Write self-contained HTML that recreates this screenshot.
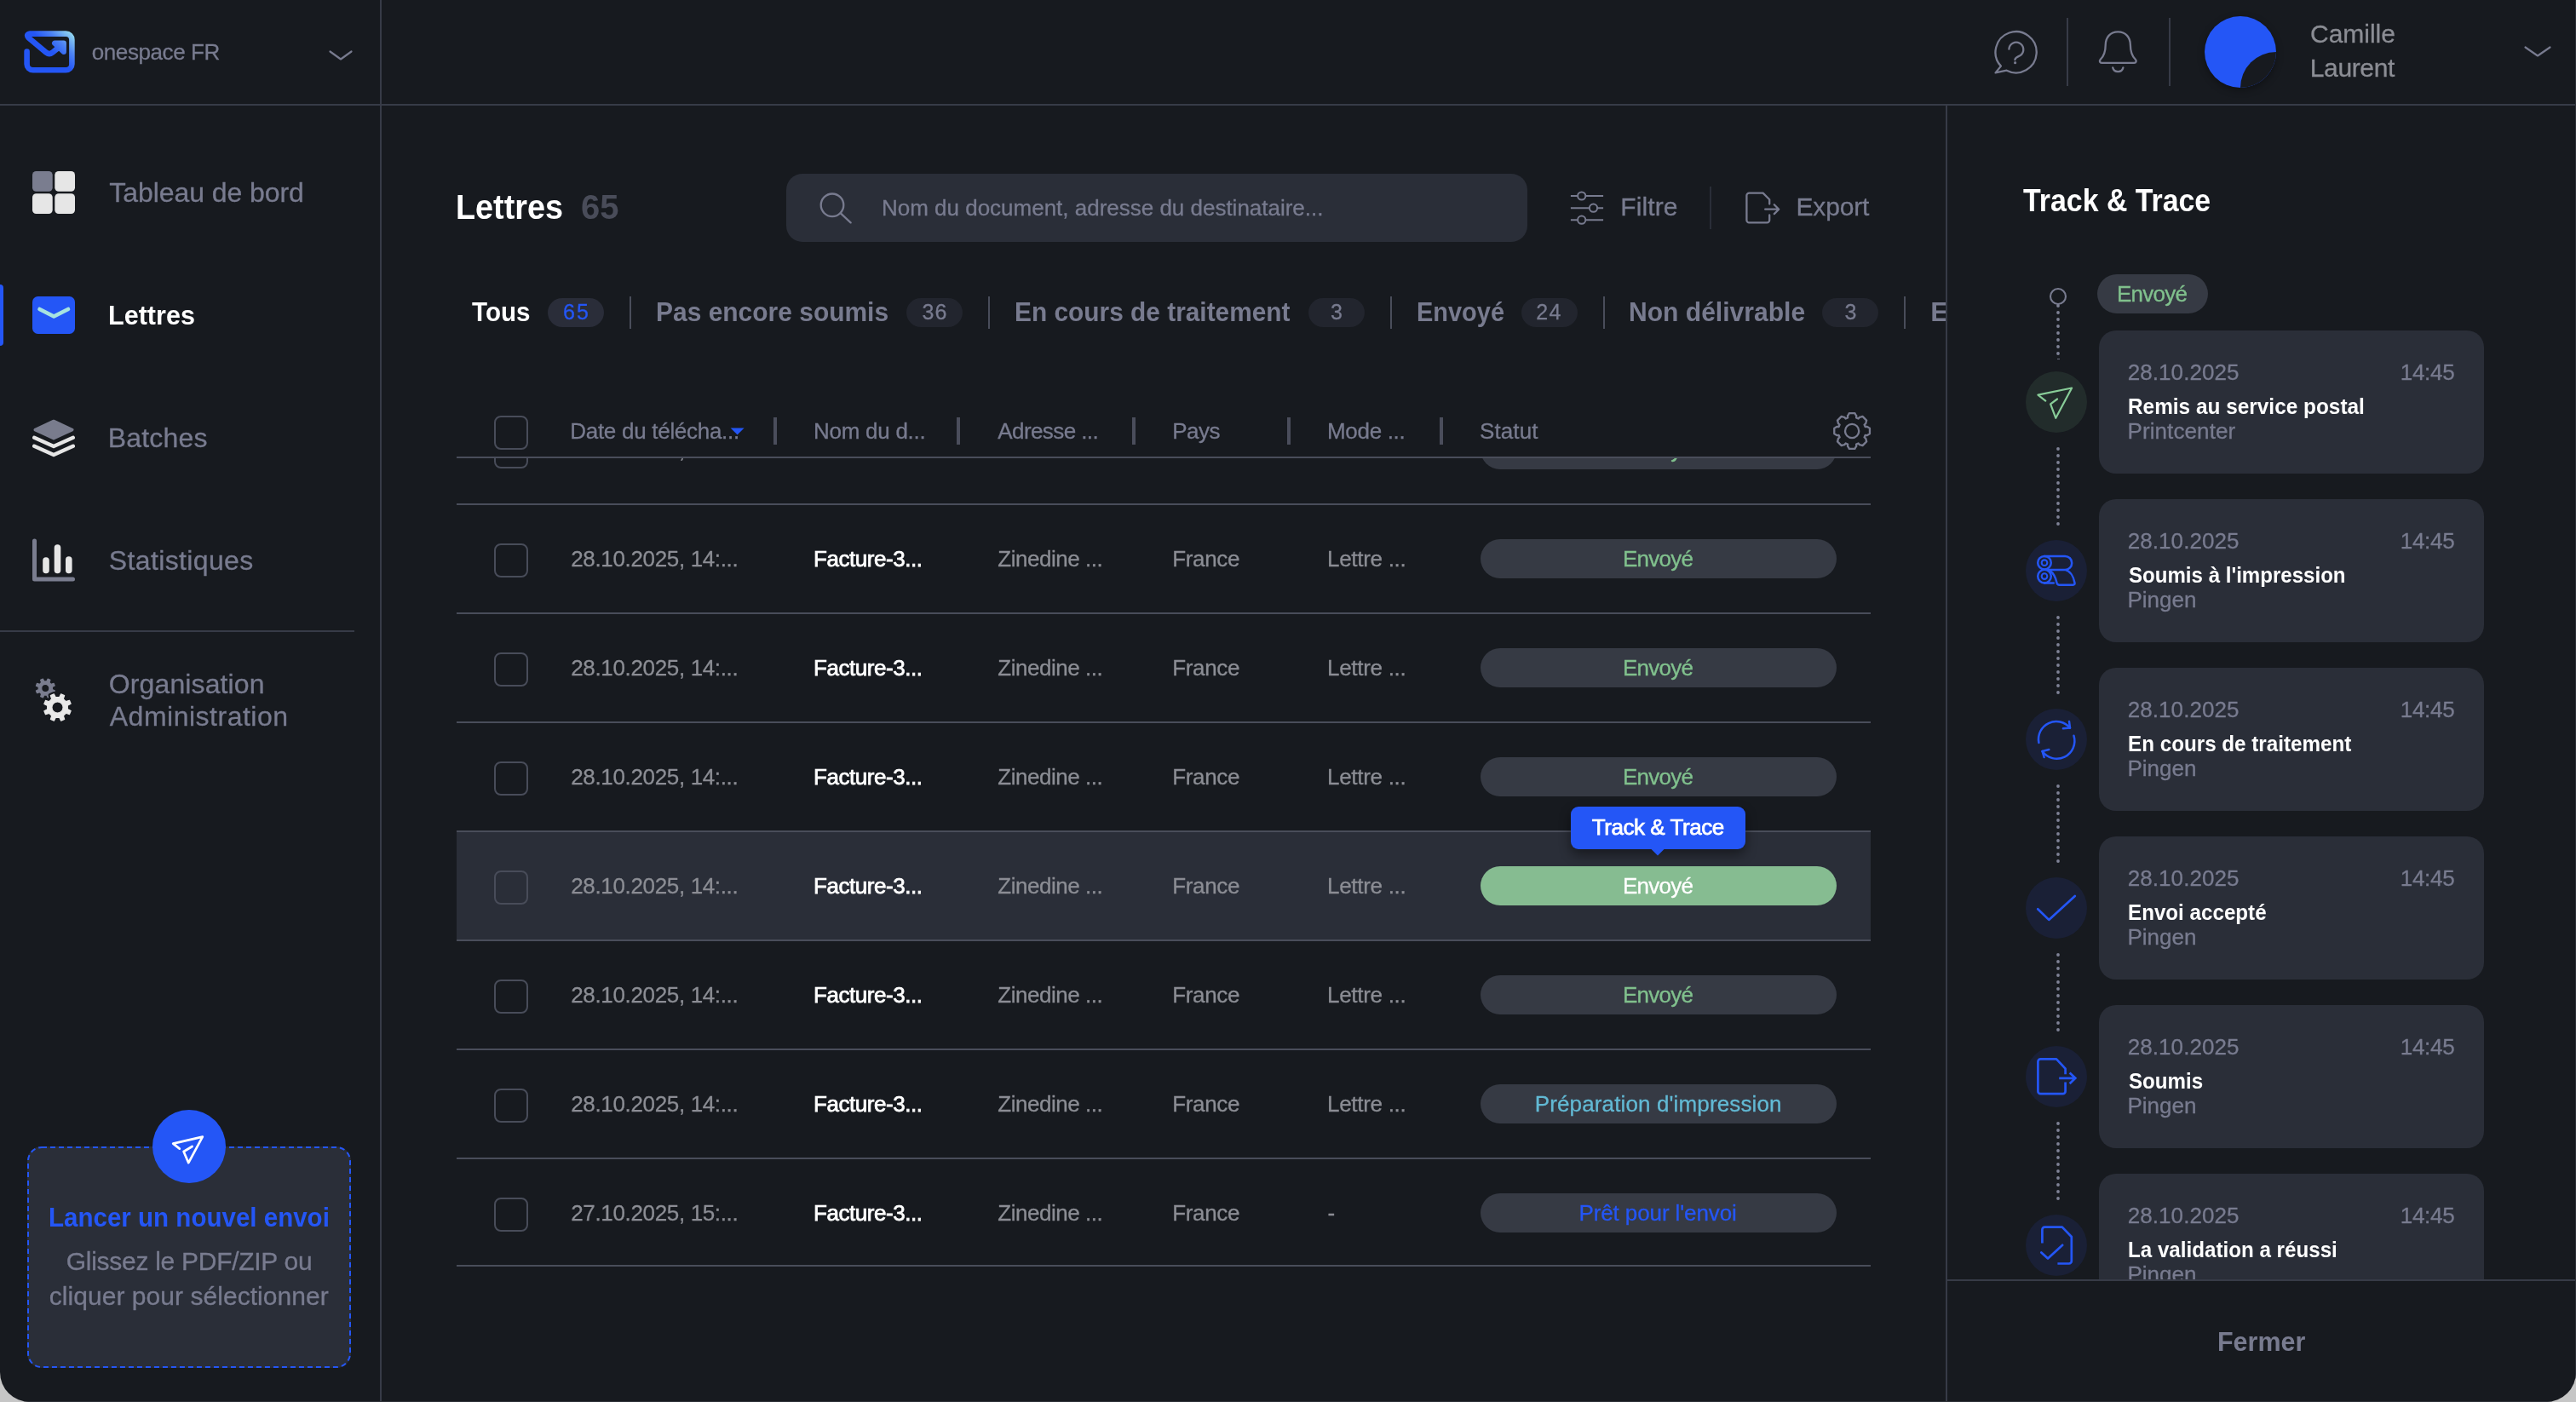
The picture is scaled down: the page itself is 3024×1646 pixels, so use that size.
<!DOCTYPE html>
<html lang="fr">
<head>
<meta charset="utf-8">
<title>Lettres – Track &amp; Trace</title>
<style>
html,body{margin:0;padding:0}
body{width:100vw;height:100vh;min-height:100%;overflow:hidden;background:#c6c6c6;font-family:"Liberation Sans",sans-serif}
#app{position:absolute;will-change:transform;left:0;top:0;width:3024px;height:1646px;background:#171a1f;border-radius:0 0 35px 35px;overflow:hidden}
#app div,#app svg,#app span.t{position:absolute}
.t{white-space:nowrap;line-height:1}
.clip,.g{left:0;top:0;width:3024px;height:1646px}
.g{position:absolute;display:block}
</style>
</head>
<body>
<div id="app">
<div style="left:446px;top:0px;width:2px;height:1646px;background:#373b47"></div><div style="left:0px;top:122px;width:3024px;height:2px;background:#373b47"></div><div style="left:2284px;top:123px;width:2px;height:1523px;background:#373b47"></div><div style="left:580px;top:488px;width:40px;height:40px;box-sizing:border-box;border:2px solid #484c59;border-radius:8px"></div>
<aside class="g" aria-label="Navigation principale"><svg style="left:28px;top:36px;" width="60" height="50" viewBox="0 0 60 50" fill="none">
<defs><linearGradient id="lg" gradientUnits="userSpaceOnUse" x1="33" y1="24" x2="55.5" y2="1.5"><stop offset="0" stop-color="#2456f6"/><stop offset=".45" stop-color="#4c82f3"/><stop offset="1" stop-color="#93d8ee"/></linearGradient></defs>
<path d="M3.6 24.6 V39.2 a7.1 7.1 0 0 0 7.1 7.1 H49.3 a7.1 7.1 0 0 0 7.1 -7.1 V10.700 a7.1 7.1 0 0 0 -7.1 -7.1 H7.4 Q2.2 4.4 5.4 8.2 L26.3 25.7 Q29.900 28.5 33.5 25.7 L44.5 16.6" stroke="url(#lg)" stroke-width="6.6" stroke-linecap="round" stroke-linejoin="round"/>
<path d="M36.2 14.8 H46.700 V24.8 Z" fill="url(#lg)" stroke="url(#lg)" stroke-width="6.4" stroke-linejoin="round"/>
</svg><svg style="left:385px;top:57px;" width="30" height="16" viewBox="0 0 30 16" fill="none"><path d="M2.5 3.5 L15 12.5 L27.5 3.5" stroke="#787b8f" stroke-width="2.2" stroke-linecap="round" stroke-linejoin="round"/></svg><svg style="left:38px;top:201px;" width="50" height="50" viewBox="0 0 50 50" fill="none">
<rect x="0" y="0" width="23.7" height="23.7" rx="4.5" fill="#7a7d8f"/>
<rect x="26.3" y="0" width="23.7" height="23.7" rx="4.5" fill="#e6e6e6"/>
<rect x="0" y="26.3" width="23.7" height="23.7" rx="4.5" fill="#e6e6e6"/>
<rect x="26.3" y="26.3" width="23.7" height="23.7" rx="4.5" fill="#e6e6e6"/>
</svg><div style="left:0px;top:334px;width:4px;height:72px;background:#2456f6;border-radius:0 4px 4px 0"></div><svg style="left:38px;top:348px;" width="50" height="44" viewBox="0 0 50 44" fill="none">
<rect x="0" y="0" width="50" height="44" rx="6.5" fill="#2456f6"/>
<path d="M8.5 15 L25.2 23.5 L42 15" stroke="#a6e3e0" stroke-width="4.6" stroke-linecap="round" stroke-linejoin="round"/>
</svg><svg style="left:38px;top:492px;" width="50" height="46" viewBox="0 0 50 46" fill="none">
<path d="M25 2.4 L46.8 12.6 L25 22.8 L3.2 12.6 Z" fill="#797c8d" stroke="#797c8d" stroke-width="3.4" stroke-linejoin="round"/>
<path d="M2.2 21.8 L25 32.1 L47.8 21.8" stroke="#e6e6e6" stroke-width="4.4" stroke-linecap="round" stroke-linejoin="round"/>
<path d="M2.2 31.7 L25 42 L47.8 31.7" stroke="#e6e6e6" stroke-width="4.4" stroke-linecap="round" stroke-linejoin="round"/>
</svg><svg style="left:38px;top:632px;" width="50" height="52" viewBox="0 0 50 52" fill="none">
<path d="M2.5 3 V48 H47.5" stroke="#7a7d8f" stroke-width="5" stroke-linecap="round" stroke-linejoin="round"/>
<path d="M16 26 V37.5 M29.5 11 V37.5 M42.8 25 V37.5" stroke="#e6e6e6" stroke-width="7.6" stroke-linecap="round"/>
</svg><div style="left:0px;top:740px;width:416px;height:2px;background:#373b47"></div><svg style="left:38px;top:792px;" width="52" height="60" viewBox="0 0 52 60" fill="none"><path d="M23.37 17.45 L26.23 18.87 L25.09 21.65 L22.06 20.64 L19.98 22.73 L21.00 25.76 L18.23 26.91 L16.79 24.06 L13.85 24.07 L12.43 26.93 L9.65 25.79 L10.66 22.76 L8.57 20.68 L5.54 21.70 L4.39 18.93 L7.24 17.49 L7.23 14.55 L4.37 13.13 L5.51 10.35 L8.54 11.36 L10.62 9.27 L9.60 6.24 L12.37 5.09 L13.81 7.94 L16.75 7.93 L18.17 5.07 L20.95 6.21 L19.94 9.24 L22.03 11.32 L25.06 10.30 L26.21 13.07 L23.36 14.51 Z M19.90 16.00 a4.6 4.6 0 1 0 -9.2 0 a4.6 4.6 0 1 0 9.2 0 Z" fill="#7a7d8f" fill-rule="evenodd" stroke="#7a7d8f" stroke-width="1.2" stroke-linejoin="round"/><path d="M41.31 40.62 L45.17 42.61 L43.53 46.60 L39.39 45.30 L36.35 48.35 L37.67 52.49 L33.69 54.15 L31.69 50.30 L27.38 50.31 L25.39 54.17 L21.40 52.53 L22.70 48.39 L19.65 45.35 L15.51 46.67 L13.85 42.69 L17.70 40.69 L17.69 36.38 L13.83 34.39 L15.47 30.40 L19.61 31.70 L22.65 28.65 L21.33 24.51 L25.31 22.85 L27.31 26.70 L31.62 26.69 L33.61 22.83 L37.60 24.47 L36.30 28.61 L39.35 31.65 L43.49 30.33 L45.15 34.31 L41.30 36.31 Z M36.10 38.50 a6.6 6.6 0 1 0 -13.2 0 a6.6 6.6 0 1 0 13.2 0 Z" fill="#171a1f" fill-rule="nonzero" stroke="#171a1f" stroke-width="5.5" stroke-linejoin="round"/><path d="M41.31 40.62 L45.17 42.61 L43.53 46.60 L39.39 45.30 L36.35 48.35 L37.67 52.49 L33.69 54.15 L31.69 50.30 L27.38 50.31 L25.39 54.17 L21.40 52.53 L22.70 48.39 L19.65 45.35 L15.51 46.67 L13.85 42.69 L17.70 40.69 L17.69 36.38 L13.83 34.39 L15.47 30.40 L19.61 31.70 L22.65 28.65 L21.33 24.51 L25.31 22.85 L27.31 26.70 L31.62 26.69 L33.61 22.83 L37.60 24.47 L36.30 28.61 L39.35 31.65 L43.49 30.33 L45.15 34.31 L41.30 36.31 Z M36.10 38.50 a6.6 6.6 0 1 0 -13.2 0 a6.6 6.6 0 1 0 13.2 0 Z" fill="#e9e9e9" fill-rule="evenodd" stroke="#e9e9e9" stroke-width="1.2" stroke-linejoin="round"/></svg><div style="left:32px;top:1346px;width:380px;height:260px;background:#2a2e38;border-radius:17px"></div><svg style="left:32px;top:1346px;" width="380" height="260" viewBox="0 0 380 260" fill="none"><rect x="1" y="1" width="378" height="258" rx="16" stroke="#2456f6" stroke-width="2" stroke-dasharray="6 4"/></svg><div style="left:179px;top:1303px;width:86px;height:86px;background:#2456f6;border-radius:50%"></div><svg style="left:198px;top:1328px;" width="46" height="44" viewBox="0 0 46 44" fill="none"><path d="M12.8 20.6 L5.2 14.6 L39.8 6.6 L23.3 37.2 L17.6 24 L27.6 18" stroke="#ffffff" stroke-width="2.7" stroke-linejoin="round" stroke-linecap="round"/></svg><span class="t" style="left:107.75px;top:48.49px;font-size:26px;color:#787b8f;letter-spacing:-0.412px;-webkit-text-stroke:0.3px currentColor;">onespace FR</span><span class="t" style="left:128.25px;top:209.91px;font-size:32px;color:#787b8f;letter-spacing:-0.069px;-webkit-text-stroke:0.3px currentColor;">Tableau de bord</span><span class="t" style="left:126.84px;top:353.66px;font-size:32px;color:#ffffff;font-weight:700;transform:scaleX(0.9552);transform-origin:0 50%;">Lettres</span><span class="t" style="left:126.75px;top:497.91px;font-size:32px;color:#787b8f;letter-spacing:0.188px;-webkit-text-stroke:0.3px currentColor;">Batches</span><span class="t" style="left:127.75px;top:641.66px;font-size:32px;color:#787b8f;letter-spacing:0.371px;-webkit-text-stroke:0.3px currentColor;">Statistiques</span><span class="t" style="left:127.75px;top:786.66px;font-size:32px;color:#787b8f;letter-spacing:0.124px;-webkit-text-stroke:0.3px currentColor;">Organisation</span><span class="t" style="left:128.75px;top:825.41px;font-size:32px;color:#787b8f;letter-spacing:0.504px;-webkit-text-stroke:0.3px currentColor;">Administration</span><span class="t" style="left:56.90px;top:1412.91px;font-size:32px;color:#2456f6;font-weight:700;transform:scaleX(0.9229);transform-origin:0 50%;">Lancer un nouvel envoi</span><span class="t" style="left:77.75px;top:1465.86px;font-size:30px;color:#787b8f;letter-spacing:-0.282px;-webkit-text-stroke:0.3px currentColor;">Glissez le PDF/ZIP ou</span><span class="t" style="left:57.75px;top:1506.61px;font-size:30px;color:#787b8f;letter-spacing:0.047px;-webkit-text-stroke:0.3px currentColor;">cliquer pour sélectionner</span></aside>
<header class="g"><svg style="left:2338px;top:33px;" width="58" height="58" viewBox="0 0 58 58" fill="none">
<path d="M10.9 44.6 A24.1 24.1 0 1 1 17.6 49.7 L4.6 52.4 Z" stroke="#787b8f" stroke-width="2.3" stroke-linejoin="round"/>
<path d="M20.4 24.6 a8.45 8.45 0 1 1 13.4 7.4 c-3.6 1.9 -6.4 2.4 -6.4 5.2" stroke="#787b8f" stroke-width="2.3" stroke-linecap="round"/>
<circle cx="27.6" cy="40.7" r="1.6" fill="#787b8f"/>
</svg><div style="left:2426px;top:21px;width:2px;height:80px;background:#373b47"></div><svg style="left:2460px;top:33px;" width="54" height="56" viewBox="0 0 54 56" fill="none">
<path d="M26.3 4.3 c-9.3 0 -14.6 7 -14.6 15.6 c0 8.4 -1.9 13 -6.1 17.1 c-1.4 1.5 -0.6 3.9 1.6 3.9 h38.2 c2.2 0 3 -2.4 1.6 -3.9 c-4.2 -4.1 -6.1 -8.7 -6.1 -17.1 c0 -8.600 -5.300 -15.600 -14.600 -15.600 Z" stroke="#787b8f" stroke-width="2.3" stroke-linejoin="round"/>
<path d="M20.2 46.4 a6.3 6.3 0 0 0 12.2 0" stroke="#787b8f" stroke-width="2.3" stroke-linecap="round"/>
</svg><div style="left:2546px;top:21px;width:2px;height:80px;background:#373b47"></div><div style="left:2588px;top:19px;width:84px;height:84px;border-radius:50%;background:#2456f6;overflow:hidden;box-shadow:0 3px 8px rgba(0,0,0,.35)"><div style="left:42px;top:42px;width:84px;height:84px;border-radius:50%;background:#171a1f"></div></div><svg style="left:2962px;top:52px;" width="34" height="18" viewBox="0 0 34 18" fill="none"><path d="M2.5 3.5 L17 13.5 L31.5 3.5" stroke="#787b8f" stroke-width="2.2" stroke-linecap="round" stroke-linejoin="round"/></svg><span class="t" style="left:2712.00px;top:25.36px;font-size:30px;color:#8b8d94;letter-spacing:-0.014px;-webkit-text-stroke:0.3px currentColor;">Camille</span><span class="t" style="left:2711.75px;top:65.36px;font-size:30px;color:#8b8d94;letter-spacing:-0.361px;-webkit-text-stroke:0.3px currentColor;">Laurent</span></header>
<main class="g"><div style="left:923px;top:204px;width:870px;height:80px;background:#2a2e38;border-radius:19px"></div><svg style="left:960px;top:223px;" width="44" height="44" viewBox="0 0 44 44" fill="none"><circle cx="17" cy="17.8" r="13.3" stroke="#787b8f" stroke-width="2.3"/><path d="M26.6 27.2 L38.6 38.4" stroke="#787b8f" stroke-width="2.3" stroke-linecap="round"/></svg><svg style="left:1842px;top:222px;" width="42" height="44" viewBox="0 0 42 44" fill="none">
<path d="M1.9 8 H9.8 M19.6 8 H40.1 M1.9 22.2 H23.6 M33.4 22.2 H40.1 M1.9 36.2 H9.8 M19.6 36.2 H40.1" stroke="#787b8f" stroke-width="2.1"/>
<circle cx="14.7" cy="8" r="4.6" stroke="#787b8f" stroke-width="2"/><circle cx="28.5" cy="22.2" r="4.6" stroke="#787b8f" stroke-width="2"/><circle cx="14.7" cy="36.2" r="4.6" stroke="#787b8f" stroke-width="2"/>
</svg><div style="left:2007px;top:219px;width:2px;height:50px;background:#2a2e38"></div><svg style="left:2046px;top:222px;" width="46" height="44" viewBox="0 0 46 44" fill="none">
<path d="M31.2 17.6 V12.2 L23.6 4.6 H7.4 a3 3 0 0 0 -3 3 V36.4 a3 3 0 0 0 3 3 H28.2 a3 3 0 0 0 3 -3 V30.4" stroke="#787b8f" stroke-width="2.3" stroke-linejoin="round" stroke-linecap="round"/>
<path d="M26.2 23.7 H42 M36.8 18.3 L42.2 23.7 L36.8 29.1" stroke="#787b8f" stroke-width="2.3" stroke-linejoin="round" stroke-linecap="round"/>
</svg><div class="clip" style="clip-path:inset(0 740px 0 0)"><div style="left:643px;top:350px;width:66px;height:34px;background:#2a2d39;border-radius:17px"></div><div style="left:739px;top:348px;width:2px;height:38px;background:#494d5a"></div><div style="left:1063.75px;top:350px;width:66.25px;height:34px;background:#22252e;border-radius:17px"></div><div style="left:1160px;top:348px;width:2px;height:38px;background:#494d5a"></div><div style="left:1535.75px;top:350px;width:66.25px;height:34px;background:#22252e;border-radius:17px"></div><div style="left:1632px;top:348px;width:2px;height:38px;background:#494d5a"></div><div style="left:1785.75px;top:350px;width:66.25px;height:34px;background:#22252e;border-radius:17px"></div><div style="left:1882px;top:348px;width:2px;height:38px;background:#494d5a"></div><div style="left:2138.75px;top:350px;width:66.25px;height:34px;background:#22252e;border-radius:17px"></div><div style="left:2235px;top:348px;width:2px;height:38px;background:#494d5a"></div><span class="t" style="left:554.25px;top:350.41px;font-size:32px;color:#ffffff;font-weight:700;transform:scaleX(0.9247);transform-origin:0 50%;">Tous</span><span class="t" style="left:661.00px;top:353.84px;font-size:25px;color:#2456f6;letter-spacing:2.096px;-webkit-text-stroke:0.3px currentColor;">65</span><span class="t" style="left:770.13px;top:350.41px;font-size:32px;color:#787b8f;font-weight:700;transform:scaleX(0.9363);transform-origin:0 50%;">Pas encore soumis</span><span class="t" style="left:1082.50px;top:353.84px;font-size:25px;color:#787b8f;letter-spacing:1.096px;-webkit-text-stroke:0.3px currentColor;">36</span><span class="t" style="left:1191.13px;top:350.41px;font-size:32px;color:#787b8f;font-weight:700;transform:scaleX(0.9331);transform-origin:0 50%;">En cours de traitement</span><span class="t" style="left:1562.00px;top:353.84px;font-size:25px;color:#787b8f;-webkit-text-stroke:0.3px currentColor;">3</span><span class="t" style="left:1662.69px;top:350.41px;font-size:32px;color:#787b8f;font-weight:700;transform:scaleX(0.9052);transform-origin:0 50%;">Envoyé</span><span class="t" style="left:1803.25px;top:353.84px;font-size:25px;color:#787b8f;letter-spacing:1.346px;-webkit-text-stroke:0.3px currentColor;">24</span><span class="t" style="left:1912.37px;top:350.41px;font-size:32px;color:#787b8f;font-weight:700;transform:scaleX(0.9394);transform-origin:0 50%;">Non délivrable</span><span class="t" style="left:2165.50px;top:353.84px;font-size:25px;color:#787b8f;-webkit-text-stroke:0.3px currentColor;">3</span><span class="t" style="left:2266.25px;top:350.41px;font-size:32px;color:#787b8f;font-weight:700;">Erreur</span></div><svg style="left:857px;top:502px;" width="18" height="9" viewBox="0 0 18 9" fill="none"><path d="M0.6 0.4 H16.6 L8.6 8.4 Z" fill="#2456f6"/></svg><div style="left:908px;top:490px;width:4px;height:32px;background:#4a4d5b"></div><div style="left:1123px;top:490px;width:4px;height:32px;background:#4a4d5b"></div><div style="left:1329.25px;top:490px;width:4px;height:32px;background:#4a4d5b"></div><div style="left:1511.25px;top:490px;width:4px;height:32px;background:#4a4d5b"></div><div style="left:1690px;top:490px;width:4px;height:32px;background:#4a4d5b"></div><svg style="left:2150px;top:482px;" width="48" height="48" viewBox="0 0 48 48" fill="none"><path d="M39.62 19.02 L41.87 18.84 L43.59 19.96 L44.94 20.70 L44.94 27.30 L43.59 28.04 L41.87 29.16 L39.62 28.98 L38.59 31.46 L40.31 32.91 L40.73 34.93 L41.17 36.40 L36.50 41.07 L35.03 40.63 L33.01 40.21 L31.56 38.49 L29.08 39.52 L29.26 41.77 L28.14 43.49 L27.40 44.84 L20.80 44.84 L20.06 43.49 L18.94 41.77 L19.12 39.52 L16.64 38.49 L15.19 40.21 L13.17 40.63 L11.70 41.07 L7.03 36.40 L7.47 34.93 L7.89 32.91 L9.61 31.46 L8.58 28.98 L6.33 29.16 L4.61 28.04 L3.26 27.30 L3.26 20.70 L4.61 19.96 L6.33 18.84 L8.58 19.02 L9.61 16.54 L7.89 15.09 L7.47 13.07 L7.03 11.60 L11.70 6.93 L13.17 7.37 L15.19 7.79 L16.64 9.51 L19.12 8.48 L18.94 6.23 L20.06 4.51 L20.80 3.16 L27.40 3.16 L28.14 4.51 L29.26 6.23 L29.08 8.48 L31.56 9.51 L33.01 7.79 L35.03 7.37 L36.50 6.93 L41.17 11.60 L40.73 13.07 L40.31 15.09 L38.59 16.54 Z" stroke="#787b8f" stroke-width="2.3" stroke-linejoin="round"/><circle cx="24.1" cy="24" r="8.1" stroke="#787b8f" stroke-width="2.3"/></svg><div style="left:536px;top:536px;width:1660px;height:2px;background:#494d5a"></div><div class="clip" style="clip-path:inset(538px 0 0 0)"><div style="left:580px;top:510px;width:40px;height:40px;box-sizing:border-box;border:2px solid #484c59;border-radius:8px"></div><div style="left:1738px;top:505px;width:418px;height:46px;background:#363a44;border-radius:23px"></div><div style="left:536px;top:591px;width:1660px;height:2px;background:#494d5a"></div><div style="left:580px;top:638px;width:40px;height:40px;box-sizing:border-box;border:2px solid #484c59;border-radius:8px"></div><div style="left:1738px;top:633px;width:418px;height:46px;background:#363a44;border-radius:23px"></div><div style="left:536px;top:719px;width:1660px;height:2px;background:#494d5a"></div><div style="left:580px;top:766px;width:40px;height:40px;box-sizing:border-box;border:2px solid #484c59;border-radius:8px"></div><div style="left:1738px;top:761px;width:418px;height:46px;background:#363a44;border-radius:23px"></div><div style="left:536px;top:847px;width:1660px;height:2px;background:#494d5a"></div><div style="left:580px;top:894px;width:40px;height:40px;box-sizing:border-box;border:2px solid #484c59;border-radius:8px"></div><div style="left:1738px;top:889px;width:418px;height:46px;background:#363a44;border-radius:23px"></div><div style="left:536px;top:977px;width:1660px;height:126px;background:#2a2e38"></div><div style="left:536px;top:975px;width:1660px;height:2px;background:#494d5a"></div><div style="left:580px;top:1022px;width:40px;height:40px;box-sizing:border-box;border:2px solid #484c59;border-radius:8px"></div><div style="left:1738px;top:1017px;width:418px;height:46px;background:#86bc91;border-radius:23px"></div><div style="left:536px;top:1103px;width:1660px;height:2px;background:#494d5a"></div><div style="left:580px;top:1150px;width:40px;height:40px;box-sizing:border-box;border:2px solid #484c59;border-radius:8px"></div><div style="left:1738px;top:1145px;width:418px;height:46px;background:#363a44;border-radius:23px"></div><div style="left:536px;top:1231px;width:1660px;height:2px;background:#494d5a"></div><div style="left:580px;top:1278px;width:40px;height:40px;box-sizing:border-box;border:2px solid #484c59;border-radius:8px"></div><div style="left:1738px;top:1273px;width:418px;height:46px;background:#363a44;border-radius:23px"></div><div style="left:536px;top:1359px;width:1660px;height:2px;background:#494d5a"></div><div style="left:580px;top:1406px;width:40px;height:40px;box-sizing:border-box;border:2px solid #484c59;border-radius:8px"></div><div style="left:1738px;top:1401px;width:418px;height:46px;background:#363a44;border-radius:23px"></div><div style="left:536px;top:1485px;width:1660px;height:2px;background:#494d5a"></div><span class="t" style="left:670.25px;top:514.99px;font-size:26px;color:#8b8d94;letter-spacing:-0.348px;-webkit-text-stroke:0.3px currentColor;">28.10.2025, 14:...</span><span class="t" style="left:955.00px;top:514.99px;font-size:26px;color:#ffffff;letter-spacing:-0.451px;-webkit-text-stroke:0.75px currentColor;">Facture-3...</span><span class="t" style="left:1171.25px;top:514.99px;font-size:26px;color:#8b8d94;letter-spacing:-0.469px;-webkit-text-stroke:0.3px currentColor;">Zinedine ...</span><span class="t" style="left:1376.25px;top:514.99px;font-size:26px;color:#8b8d94;letter-spacing:-0.342px;-webkit-text-stroke:0.3px currentColor;">France</span><span class="t" style="left:1558.00px;top:514.99px;font-size:26px;color:#8b8d94;letter-spacing:-0.295px;-webkit-text-stroke:0.3px currentColor;">Lettre ...</span><span class="t" style="left:1905.00px;top:515.24px;font-size:26px;color:#80c08d;letter-spacing:-0.752px;-webkit-text-stroke:0.3px currentColor;">Envoyé</span><span class="t" style="left:670.25px;top:642.99px;font-size:26px;color:#8b8d94;letter-spacing:-0.348px;-webkit-text-stroke:0.3px currentColor;">28.10.2025, 14:...</span><span class="t" style="left:955.00px;top:642.99px;font-size:26px;color:#ffffff;letter-spacing:-0.451px;-webkit-text-stroke:0.75px currentColor;">Facture-3...</span><span class="t" style="left:1171.25px;top:642.99px;font-size:26px;color:#8b8d94;letter-spacing:-0.469px;-webkit-text-stroke:0.3px currentColor;">Zinedine ...</span><span class="t" style="left:1376.25px;top:642.99px;font-size:26px;color:#8b8d94;letter-spacing:-0.342px;-webkit-text-stroke:0.3px currentColor;">France</span><span class="t" style="left:1558.00px;top:642.99px;font-size:26px;color:#8b8d94;letter-spacing:-0.295px;-webkit-text-stroke:0.3px currentColor;">Lettre ...</span><span class="t" style="left:1905.00px;top:643.24px;font-size:26px;color:#80c08d;letter-spacing:-0.752px;-webkit-text-stroke:0.3px currentColor;">Envoyé</span><span class="t" style="left:670.25px;top:770.99px;font-size:26px;color:#8b8d94;letter-spacing:-0.348px;-webkit-text-stroke:0.3px currentColor;">28.10.2025, 14:...</span><span class="t" style="left:955.00px;top:770.99px;font-size:26px;color:#ffffff;letter-spacing:-0.451px;-webkit-text-stroke:0.75px currentColor;">Facture-3...</span><span class="t" style="left:1171.25px;top:770.99px;font-size:26px;color:#8b8d94;letter-spacing:-0.469px;-webkit-text-stroke:0.3px currentColor;">Zinedine ...</span><span class="t" style="left:1376.25px;top:770.99px;font-size:26px;color:#8b8d94;letter-spacing:-0.342px;-webkit-text-stroke:0.3px currentColor;">France</span><span class="t" style="left:1558.00px;top:770.99px;font-size:26px;color:#8b8d94;letter-spacing:-0.295px;-webkit-text-stroke:0.3px currentColor;">Lettre ...</span><span class="t" style="left:1905.00px;top:771.24px;font-size:26px;color:#80c08d;letter-spacing:-0.752px;-webkit-text-stroke:0.3px currentColor;">Envoyé</span><span class="t" style="left:670.25px;top:898.99px;font-size:26px;color:#8b8d94;letter-spacing:-0.348px;-webkit-text-stroke:0.3px currentColor;">28.10.2025, 14:...</span><span class="t" style="left:955.00px;top:898.99px;font-size:26px;color:#ffffff;letter-spacing:-0.451px;-webkit-text-stroke:0.75px currentColor;">Facture-3...</span><span class="t" style="left:1171.25px;top:898.99px;font-size:26px;color:#8b8d94;letter-spacing:-0.469px;-webkit-text-stroke:0.3px currentColor;">Zinedine ...</span><span class="t" style="left:1376.25px;top:898.99px;font-size:26px;color:#8b8d94;letter-spacing:-0.342px;-webkit-text-stroke:0.3px currentColor;">France</span><span class="t" style="left:1558.00px;top:898.99px;font-size:26px;color:#8b8d94;letter-spacing:-0.295px;-webkit-text-stroke:0.3px currentColor;">Lettre ...</span><span class="t" style="left:1905.00px;top:899.24px;font-size:26px;color:#80c08d;letter-spacing:-0.752px;-webkit-text-stroke:0.3px currentColor;">Envoyé</span><span class="t" style="left:670.25px;top:1026.99px;font-size:26px;color:#8b8d94;letter-spacing:-0.348px;-webkit-text-stroke:0.3px currentColor;">28.10.2025, 14:...</span><span class="t" style="left:955.00px;top:1026.99px;font-size:26px;color:#ffffff;letter-spacing:-0.451px;-webkit-text-stroke:0.75px currentColor;">Facture-3...</span><span class="t" style="left:1171.25px;top:1026.99px;font-size:26px;color:#8b8d94;letter-spacing:-0.469px;-webkit-text-stroke:0.3px currentColor;">Zinedine ...</span><span class="t" style="left:1376.25px;top:1026.99px;font-size:26px;color:#8b8d94;letter-spacing:-0.342px;-webkit-text-stroke:0.3px currentColor;">France</span><span class="t" style="left:1558.00px;top:1026.99px;font-size:26px;color:#8b8d94;letter-spacing:-0.295px;-webkit-text-stroke:0.3px currentColor;">Lettre ...</span><span class="t" style="left:1905.00px;top:1027.24px;font-size:26px;color:#ffffff;letter-spacing:-0.752px;-webkit-text-stroke:0.3px currentColor;">Envoyé</span><span class="t" style="left:670.25px;top:1154.99px;font-size:26px;color:#8b8d94;letter-spacing:-0.348px;-webkit-text-stroke:0.3px currentColor;">28.10.2025, 14:...</span><span class="t" style="left:955.00px;top:1154.99px;font-size:26px;color:#ffffff;letter-spacing:-0.451px;-webkit-text-stroke:0.75px currentColor;">Facture-3...</span><span class="t" style="left:1171.25px;top:1154.99px;font-size:26px;color:#8b8d94;letter-spacing:-0.469px;-webkit-text-stroke:0.3px currentColor;">Zinedine ...</span><span class="t" style="left:1376.25px;top:1154.99px;font-size:26px;color:#8b8d94;letter-spacing:-0.342px;-webkit-text-stroke:0.3px currentColor;">France</span><span class="t" style="left:1558.00px;top:1154.99px;font-size:26px;color:#8b8d94;letter-spacing:-0.295px;-webkit-text-stroke:0.3px currentColor;">Lettre ...</span><span class="t" style="left:1905.00px;top:1155.24px;font-size:26px;color:#80c08d;letter-spacing:-0.752px;-webkit-text-stroke:0.3px currentColor;">Envoyé</span><span class="t" style="left:670.25px;top:1282.99px;font-size:26px;color:#8b8d94;letter-spacing:-0.348px;-webkit-text-stroke:0.3px currentColor;">28.10.2025, 14:...</span><span class="t" style="left:955.00px;top:1282.99px;font-size:26px;color:#ffffff;letter-spacing:-0.451px;-webkit-text-stroke:0.75px currentColor;">Facture-3...</span><span class="t" style="left:1171.25px;top:1282.99px;font-size:26px;color:#8b8d94;letter-spacing:-0.469px;-webkit-text-stroke:0.3px currentColor;">Zinedine ...</span><span class="t" style="left:1376.25px;top:1282.99px;font-size:26px;color:#8b8d94;letter-spacing:-0.342px;-webkit-text-stroke:0.3px currentColor;">France</span><span class="t" style="left:1558.00px;top:1282.99px;font-size:26px;color:#8b8d94;letter-spacing:-0.295px;-webkit-text-stroke:0.3px currentColor;">Lettre ...</span><span class="t" style="left:1801.75px;top:1283.24px;font-size:26px;color:#62b9d4;letter-spacing:0.128px;-webkit-text-stroke:0.3px currentColor;">Préparation d'impression</span><span class="t" style="left:670.25px;top:1410.99px;font-size:26px;color:#8b8d94;letter-spacing:-0.348px;-webkit-text-stroke:0.3px currentColor;">27.10.2025, 15:...</span><span class="t" style="left:955.00px;top:1410.99px;font-size:26px;color:#ffffff;letter-spacing:-0.451px;-webkit-text-stroke:0.75px currentColor;">Facture-3...</span><span class="t" style="left:1171.25px;top:1410.99px;font-size:26px;color:#8b8d94;letter-spacing:-0.469px;-webkit-text-stroke:0.3px currentColor;">Zinedine ...</span><span class="t" style="left:1376.25px;top:1410.99px;font-size:26px;color:#8b8d94;letter-spacing:-0.342px;-webkit-text-stroke:0.3px currentColor;">France</span><span class="t" style="left:1558.50px;top:1410.99px;font-size:26px;color:#8b8d94;-webkit-text-stroke:0.3px currentColor;">-</span><span class="t" style="left:1853.50px;top:1411.24px;font-size:26px;color:#2456f6;letter-spacing:-0.112px;-webkit-text-stroke:0.3px currentColor;">Prêt pour l'envoi</span></div><div style="left:1844px;top:947px;width:205px;height:50px;background:#2456f6;border-radius:9px;box-shadow:0 6px 14px rgba(0,0,0,.45)"></div><svg style="left:1936px;top:996px;" width="20" height="10" viewBox="0 0 20 10" fill="none"><path d="M1.5 0 H18.500 L10 8.6 Z" fill="#2456f6"/></svg><span class="t" style="left:535.11px;top:223.14px;font-size:40px;color:#ffffff;font-weight:700;transform:scaleX(0.9452);transform-origin:0 50%;">Lettres</span><span class="t" style="left:682.00px;top:223.14px;font-size:40px;color:#494c59;font-weight:700;">65</span><span class="t" style="left:1035.00px;top:230.99px;font-size:26px;color:#787b8f;letter-spacing:-0.009px;-webkit-text-stroke:0.3px currentColor;">Nom du document, adresse du destinataire...</span><span class="t" style="left:1902.25px;top:228.35px;font-size:30px;color:#787b8f;letter-spacing:0.104px;-webkit-text-stroke:0.3px currentColor;">Filtre</span><span class="t" style="left:2108.50px;top:228.35px;font-size:30px;color:#787b8f;letter-spacing:-0.174px;-webkit-text-stroke:0.3px currentColor;">Export</span><span class="t" style="left:669.25px;top:492.99px;font-size:26px;color:#787b8f;letter-spacing:-0.284px;-webkit-text-stroke:0.3px currentColor;">Date du télécha...</span><span class="t" style="left:955.00px;top:492.99px;font-size:26px;color:#787b8f;letter-spacing:-0.267px;-webkit-text-stroke:0.3px currentColor;">Nom du d...</span><span class="t" style="left:1171.25px;top:492.99px;font-size:26px;color:#787b8f;letter-spacing:-0.580px;-webkit-text-stroke:0.3px currentColor;">Adresse ...</span><span class="t" style="left:1376.25px;top:492.99px;font-size:26px;color:#787b8f;letter-spacing:-0.517px;-webkit-text-stroke:0.3px currentColor;">Pays</span><span class="t" style="left:1558.00px;top:492.99px;font-size:26px;color:#787b8f;letter-spacing:-0.316px;-webkit-text-stroke:0.3px currentColor;">Mode ...</span><span class="t" style="left:1737.00px;top:492.99px;font-size:26px;color:#787b8f;letter-spacing:0.108px;-webkit-text-stroke:0.3px currentColor;">Statut</span><span class="t" style="left:1868.75px;top:958.49px;font-size:26px;color:#ffffff;letter-spacing:-0.447px;-webkit-text-stroke:0.75px currentColor;">Track &amp; Trace</span></main>
<section class="g" aria-label="Track &amp; Trace"><div class="clip" style="clip-path:inset(124px 0 144px 2286px)"><svg style="left:2404px;top:336px;" width="24" height="24" viewBox="0 0 24 24" fill="none"><circle cx="12" cy="12" r="9" stroke="#787b8f" stroke-width="2.1"/></svg><div style="left:2462px;top:322px;width:130px;height:46px;background:#363a44;border-radius:23px"></div><svg style="left:2413px;top:357px;" width="6" height="60" viewBox="0 0 6 60" fill="none"><circle cx="3" cy="2" r="1.9" fill="#7f8296"/><circle cx="3" cy="10" r="1.9" fill="#7f8296"/><circle cx="3" cy="18" r="1.9" fill="#7f8296"/><circle cx="3" cy="26" r="1.9" fill="#7f8296"/><circle cx="3" cy="34" r="1.9" fill="#7f8296"/><circle cx="3" cy="42" r="1.9" fill="#7f8296"/><circle cx="3" cy="50" r="1.9" fill="#7f8296"/><circle cx="3" cy="58" r="1.9" fill="#7f8296"/></svg><div style="left:2414.5px;top:421px;width:3px;height:1.2px;background:#7f8296;opacity:.8"></div><div style="left:2464px;top:388px;width:452px;height:168px;background:#2a2e38;border-radius:20px"></div><svg style="left:2378px;top:436px;" width="72" height="72" viewBox="0 0 72 72" fill="none"><circle cx="36" cy="36" r="36" fill="#222c2b"/><path d="M23.3 34.6 L14.4 27.7 L54.1 19.5 L35.3 54.8 L29.1 38.3 L37 32.5" stroke="#88cc98" stroke-width="2.2" stroke-linejoin="round" stroke-linecap="round"/></svg><svg style="left:2413px;top:525px;" width="6" height="92" viewBox="0 0 6 92" fill="none"><circle cx="3" cy="2" r="1.9" fill="#7f8296"/><circle cx="3" cy="10" r="1.9" fill="#7f8296"/><circle cx="3" cy="18" r="1.9" fill="#7f8296"/><circle cx="3" cy="26" r="1.9" fill="#7f8296"/><circle cx="3" cy="34" r="1.9" fill="#7f8296"/><circle cx="3" cy="42" r="1.9" fill="#7f8296"/><circle cx="3" cy="50" r="1.9" fill="#7f8296"/><circle cx="3" cy="58" r="1.9" fill="#7f8296"/><circle cx="3" cy="66" r="1.9" fill="#7f8296"/><circle cx="3" cy="74" r="1.9" fill="#7f8296"/><circle cx="3" cy="82" r="1.9" fill="#7f8296"/><circle cx="3" cy="90" r="1.9" fill="#7f8296"/></svg><div style="left:2464px;top:586px;width:452px;height:168px;background:#2a2e38;border-radius:20px"></div><svg style="left:2378px;top:634px;" width="72" height="72" viewBox="0 0 72 72" fill="none"><circle cx="36" cy="36" r="36" fill="#1a2036"/><circle cx="22" cy="26.7" r="7.8" stroke="#2456f6" stroke-width="2.5"/><circle cx="22" cy="26.7" r="3.3" stroke="#2456f6" stroke-width="2.1"/>
<circle cx="22" cy="42.6" r="7.8" stroke="#2456f6" stroke-width="2.5"/><circle cx="22" cy="42.6" r="3.3" stroke="#2456f6" stroke-width="2.1"/>
<path d="M22 18.9 H46.2 a8 8 0 0 1 0 16 H26.5 M22 50.4 H32.8 M46.2 34.9 C52.2 36.4 56.2 43 57.5 50.2 Q57.9 52.7 55.5 52.7 H39.4 Q37.1 52.7 36.5 50.3 C35 43.6 32.6 38.8 28.6 36.3" stroke="#2456f6" stroke-width="2.5" stroke-linejoin="round" stroke-linecap="round"/></svg><svg style="left:2413px;top:723px;" width="6" height="92" viewBox="0 0 6 92" fill="none"><circle cx="3" cy="2" r="1.9" fill="#7f8296"/><circle cx="3" cy="10" r="1.9" fill="#7f8296"/><circle cx="3" cy="18" r="1.9" fill="#7f8296"/><circle cx="3" cy="26" r="1.9" fill="#7f8296"/><circle cx="3" cy="34" r="1.9" fill="#7f8296"/><circle cx="3" cy="42" r="1.9" fill="#7f8296"/><circle cx="3" cy="50" r="1.9" fill="#7f8296"/><circle cx="3" cy="58" r="1.9" fill="#7f8296"/><circle cx="3" cy="66" r="1.9" fill="#7f8296"/><circle cx="3" cy="74" r="1.9" fill="#7f8296"/><circle cx="3" cy="82" r="1.9" fill="#7f8296"/><circle cx="3" cy="90" r="1.9" fill="#7f8296"/></svg><div style="left:2464px;top:784px;width:452px;height:168px;background:#2a2e38;border-radius:20px"></div><svg style="left:2378px;top:832px;" width="72" height="72" viewBox="0 0 72 72" fill="none"><circle cx="36" cy="36" r="36" fill="#1a2036"/><path d="M15.4 40 A20.9 20.9 0 0 1 52 22.600" stroke="#2456f6" stroke-width="2.5" stroke-linecap="round"/>
<path d="M56.5 31.8 A20.9 20.9 0 0 1 19.5 50" stroke="#2456f6" stroke-width="2.5" stroke-linecap="round"/>
<path d="M51 14.9 L52 22.600 L43.9 23.3" stroke="#2456f6" stroke-width="2.5" stroke-linecap="round" stroke-linejoin="round"/>
<path d="M27.3 48 L19.5 50 L21.6 57" stroke="#2456f6" stroke-width="2.5" stroke-linecap="round" stroke-linejoin="round"/></svg><svg style="left:2413px;top:921px;" width="6" height="92" viewBox="0 0 6 92" fill="none"><circle cx="3" cy="2" r="1.9" fill="#7f8296"/><circle cx="3" cy="10" r="1.9" fill="#7f8296"/><circle cx="3" cy="18" r="1.9" fill="#7f8296"/><circle cx="3" cy="26" r="1.9" fill="#7f8296"/><circle cx="3" cy="34" r="1.9" fill="#7f8296"/><circle cx="3" cy="42" r="1.9" fill="#7f8296"/><circle cx="3" cy="50" r="1.9" fill="#7f8296"/><circle cx="3" cy="58" r="1.9" fill="#7f8296"/><circle cx="3" cy="66" r="1.9" fill="#7f8296"/><circle cx="3" cy="74" r="1.9" fill="#7f8296"/><circle cx="3" cy="82" r="1.9" fill="#7f8296"/><circle cx="3" cy="90" r="1.9" fill="#7f8296"/></svg><div style="left:2464px;top:982px;width:452px;height:168px;background:#2a2e38;border-radius:20px"></div><svg style="left:2378px;top:1030px;" width="72" height="72" viewBox="0 0 72 72" fill="none"><circle cx="36" cy="36" r="36" fill="#1a2036"/><path d="M14.2 37.2 L27.2 49.9 L57.8 22" stroke="#2456f6" stroke-width="2.7" stroke-linecap="round" stroke-linejoin="round"/></svg><svg style="left:2413px;top:1119px;" width="6" height="92" viewBox="0 0 6 92" fill="none"><circle cx="3" cy="2" r="1.9" fill="#7f8296"/><circle cx="3" cy="10" r="1.9" fill="#7f8296"/><circle cx="3" cy="18" r="1.9" fill="#7f8296"/><circle cx="3" cy="26" r="1.9" fill="#7f8296"/><circle cx="3" cy="34" r="1.9" fill="#7f8296"/><circle cx="3" cy="42" r="1.9" fill="#7f8296"/><circle cx="3" cy="50" r="1.9" fill="#7f8296"/><circle cx="3" cy="58" r="1.9" fill="#7f8296"/><circle cx="3" cy="66" r="1.9" fill="#7f8296"/><circle cx="3" cy="74" r="1.9" fill="#7f8296"/><circle cx="3" cy="82" r="1.9" fill="#7f8296"/><circle cx="3" cy="90" r="1.9" fill="#7f8296"/></svg><div style="left:2464px;top:1180px;width:452px;height:168px;background:#2a2e38;border-radius:20px"></div><svg style="left:2378px;top:1228px;" width="72" height="72" viewBox="0 0 72 72" fill="none"><circle cx="36" cy="36" r="36" fill="#1a2036"/><path d="M46.6 33.2 V26.7 L36 15.4 H17.4 a3 3 0 0 0 -3 3 V53.2 a3 3 0 0 0 3 3 H43.600 a3 3 0 0 0 3 -3 V42.6" stroke="#2456f6" stroke-width="2.7" stroke-linejoin="round" stroke-linecap="butt"/>
<path d="M39.2 37.8 H58 M51.6 31.600 L58.3 37.8 L51.6 44.3" stroke="#2456f6" stroke-width="2.7" stroke-linejoin="miter" stroke-linecap="butt"/></svg><svg style="left:2413px;top:1317px;" width="6" height="92" viewBox="0 0 6 92" fill="none"><circle cx="3" cy="2" r="1.9" fill="#7f8296"/><circle cx="3" cy="10" r="1.9" fill="#7f8296"/><circle cx="3" cy="18" r="1.9" fill="#7f8296"/><circle cx="3" cy="26" r="1.9" fill="#7f8296"/><circle cx="3" cy="34" r="1.9" fill="#7f8296"/><circle cx="3" cy="42" r="1.9" fill="#7f8296"/><circle cx="3" cy="50" r="1.9" fill="#7f8296"/><circle cx="3" cy="58" r="1.9" fill="#7f8296"/><circle cx="3" cy="66" r="1.9" fill="#7f8296"/><circle cx="3" cy="74" r="1.9" fill="#7f8296"/><circle cx="3" cy="82" r="1.9" fill="#7f8296"/><circle cx="3" cy="90" r="1.9" fill="#7f8296"/></svg><div style="left:2464px;top:1378px;width:452px;height:168px;background:#2a2e38;border-radius:20px"></div><svg style="left:2378px;top:1426px;" width="72" height="72" viewBox="0 0 72 72" fill="none"><circle cx="36" cy="36" r="36" fill="#1a2036"/><path d="M19.400 33.6 V17.6 a3 3 0 0 1 3 -3 H42.8 L53.8 26 V54.5 a3 3 0 0 1 -3 3 H37.4" stroke="#2456f6" stroke-width="2.7" stroke-linejoin="round" stroke-linecap="butt"/>
<path d="M18.3 44.400 L26 51.6 L43.2 35.800" stroke="#2456f6" stroke-width="2.7" stroke-linejoin="round" stroke-linecap="round"/></svg><span class="t" style="left:2485.00px;top:331.74px;font-size:26px;color:#80c08d;letter-spacing:-0.752px;-webkit-text-stroke:0.3px currentColor;">Envoyé</span><span class="t" style="left:2497.75px;top:423.74px;font-size:26px;color:#787b8f;letter-spacing:0.065px;-webkit-text-stroke:0.3px currentColor;">28.10.2025</span><span class="t" style="left:2817.75px;top:423.74px;font-size:26px;color:#787b8f;letter-spacing:-0.276px;-webkit-text-stroke:0.3px currentColor;">14:45</span><span class="t" style="left:2497.81px;top:464.24px;font-size:26px;color:#ffffff;font-weight:700;transform:scaleX(0.9378);transform-origin:0 50%;">Remis au service postal</span><span class="t" style="left:2497.50px;top:493.49px;font-size:26px;color:#787b8f;letter-spacing:0.094px;-webkit-text-stroke:0.3px currentColor;">Printcenter</span><span class="t" style="left:2497.75px;top:621.74px;font-size:26px;color:#787b8f;letter-spacing:0.065px;-webkit-text-stroke:0.3px currentColor;">28.10.2025</span><span class="t" style="left:2817.75px;top:621.74px;font-size:26px;color:#787b8f;letter-spacing:-0.276px;-webkit-text-stroke:0.3px currentColor;">14:45</span><span class="t" style="left:2498.75px;top:662.24px;font-size:26px;color:#ffffff;font-weight:700;transform:scaleX(0.9259);transform-origin:0 50%;">Soumis à l'impression</span><span class="t" style="left:2497.50px;top:691.49px;font-size:26px;color:#787b8f;-webkit-text-stroke:0.3px currentColor;">Pingen</span><span class="t" style="left:2497.75px;top:819.74px;font-size:26px;color:#787b8f;letter-spacing:0.065px;-webkit-text-stroke:0.3px currentColor;">28.10.2025</span><span class="t" style="left:2817.75px;top:819.74px;font-size:26px;color:#787b8f;letter-spacing:-0.276px;-webkit-text-stroke:0.3px currentColor;">14:45</span><span class="t" style="left:2497.82px;top:860.24px;font-size:26px;color:#ffffff;font-weight:700;transform:scaleX(0.9312);transform-origin:0 50%;">En cours de traitement</span><span class="t" style="left:2497.50px;top:889.49px;font-size:26px;color:#787b8f;-webkit-text-stroke:0.3px currentColor;">Pingen</span><span class="t" style="left:2497.75px;top:1017.74px;font-size:26px;color:#787b8f;letter-spacing:0.065px;-webkit-text-stroke:0.3px currentColor;">28.10.2025</span><span class="t" style="left:2817.75px;top:1017.74px;font-size:26px;color:#787b8f;letter-spacing:-0.276px;-webkit-text-stroke:0.3px currentColor;">14:45</span><span class="t" style="left:2497.82px;top:1058.24px;font-size:26px;color:#ffffff;font-weight:700;transform:scaleX(0.9300);transform-origin:0 50%;">Envoi accepté</span><span class="t" style="left:2497.50px;top:1087.49px;font-size:26px;color:#787b8f;-webkit-text-stroke:0.3px currentColor;">Pingen</span><span class="t" style="left:2497.75px;top:1215.74px;font-size:26px;color:#787b8f;letter-spacing:0.065px;-webkit-text-stroke:0.3px currentColor;">28.10.2025</span><span class="t" style="left:2817.75px;top:1215.74px;font-size:26px;color:#787b8f;letter-spacing:-0.276px;-webkit-text-stroke:0.3px currentColor;">14:45</span><span class="t" style="left:2498.75px;top:1256.24px;font-size:26px;color:#ffffff;font-weight:700;transform:scaleX(0.9283);transform-origin:0 50%;">Soumis</span><span class="t" style="left:2497.50px;top:1285.49px;font-size:26px;color:#787b8f;-webkit-text-stroke:0.3px currentColor;">Pingen</span><span class="t" style="left:2497.75px;top:1413.74px;font-size:26px;color:#787b8f;letter-spacing:0.065px;-webkit-text-stroke:0.3px currentColor;">28.10.2025</span><span class="t" style="left:2817.75px;top:1413.74px;font-size:26px;color:#787b8f;letter-spacing:-0.276px;-webkit-text-stroke:0.3px currentColor;">14:45</span><span class="t" style="left:2497.82px;top:1454.24px;font-size:26px;color:#ffffff;font-weight:700;transform:scaleX(0.9296);transform-origin:0 50%;">La validation a réussi</span><span class="t" style="left:2497.50px;top:1483.49px;font-size:26px;color:#787b8f;-webkit-text-stroke:0.3px currentColor;">Pingen</span></div><div style="left:2286px;top:1502px;width:738px;height:2px;background:#373b47"></div><span class="t" style="left:2374.50px;top:218.28px;font-size:36px;color:#ffffff;font-weight:700;transform:scaleX(0.9404);transform-origin:0 50%;">Track &amp; Trace</span><span class="t" style="left:2603.10px;top:1558.91px;font-size:32px;color:#787b8f;font-weight:700;transform:scaleX(0.9524);transform-origin:0 50%;">Fermer</span></section>
<div style="left:3023px;top:0px;width:1px;height:1646px;background:#2d3037"></div><div style="left:0px;top:1645px;width:3024px;height:1px;background:#2d3037"></div>
</div>
<script>(function(){var w=window.innerWidth;if(w&&w!==3024){var a=document.getElementById('app');a.style.transformOrigin='0 0';a.style.transform='scale('+(w/3024)+')';}})();</script>
</body>
</html>
